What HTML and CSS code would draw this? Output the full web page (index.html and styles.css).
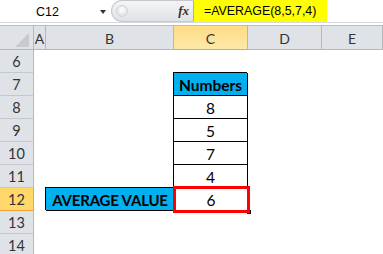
FILE: index.html
```html
<!DOCTYPE html>
<html>
<head>
<meta charset="utf-8">
<link rel="stylesheet" href="styles.css">
</head>
<body>
<div class="app">
  <div class="fbar">
    <div class="namebox"><span class="nb-text">C12</span><span class="nb-arrow"></span></div>
    <div class="pill"><span class="knob"></span><span class="fx">fx</span></div>
    <div class="formula">=AVERAGE(8,5,7,4)</div>
    <div class="rest"></div>
  </div>
  <div class="strip"></div>
  <div class="sheet">
    <div class="hd corner"><span class="tri"></span></div>
    <div class="hd col">A</div>
    <div class="hd col">B</div>
    <div class="hd col sel">C</div>
    <div class="hd col">D</div>
    <div class="hd col">E</div>

    <div class="hd row">6</div><div class="c"></div><div class="c"></div><div class="c"></div><div class="c"></div><div class="c"></div>
    <div class="hd row">7</div><div class="c"></div><div class="c"></div><div class="c t head">Numbers</div><div class="c"></div><div class="c"></div>
    <div class="hd row">8</div><div class="c"></div><div class="c"></div><div class="c t">8</div><div class="c"></div><div class="c"></div>
    <div class="hd row">9</div><div class="c"></div><div class="c"></div><div class="c t">5</div><div class="c"></div><div class="c"></div>
    <div class="hd row">10</div><div class="c"></div><div class="c"></div><div class="c t">7</div><div class="c"></div><div class="c"></div>
    <div class="hd row">11</div><div class="c"></div><div class="c"></div><div class="c t">4</div><div class="c"></div><div class="c"></div>
    <div class="hd row sel">12</div><div class="c"></div><div class="c label">AVERAGE VALUE</div><div class="c t active">6</div><div class="c"></div><div class="c"></div>
    <div class="hd row">13</div><div class="c"></div><div class="c"></div><div class="c"></div><div class="c"></div><div class="c"></div>
    <div class="hd row">14</div><div class="c"></div><div class="c"></div><div class="c"></div><div class="c"></div><div class="c"></div>
  </div>
</div>
</body>
</html>
```

FILE: styles.css
```css
html, body {
  margin: 0;
  padding: 0;
  background: #ffffff;
}
.app {
  width: 383px;
  height: 254px;
  overflow: hidden;
  font-family: Lato, "Liberation Sans", sans-serif;
}
.fbar {
  display: flex;
  height: 22px;
  border-bottom: 1px solid #d6d9dd;
  background: #ffffff;
}
.namebox {
  width: 110px;
  display: flex;
  align-items: center;
  font-family: "Liberation Sans", sans-serif;
  font-size: 12.5px;
  color: #000;
}
.nb-text {
  margin-left: 36px;
  margin-top: 1px;
}
.nb-arrow {
  margin-left: 41px;
  margin-top: 2px;
  width: 0;
  height: 0;
  border-left: 3.5px solid transparent;
  border-right: 3.5px solid transparent;
  border-top: 4px solid #333;
}
.pill {
  width: 83px;
  margin-left: 1px;
  background: linear-gradient(#f4f5f7, #dfe2e6);
  border-radius: 11px 0 0 11px;
  border: 1px solid #c3c7cc;
  border-right: 1px solid #a9adb3;
  box-sizing: border-box;
  display: flex;
  align-items: center;
}
.knob {
  width: 10px;
  height: 10px;
  border-radius: 50%;
  margin-left: 4px;
  background: radial-gradient(circle at 50% 40%, #ffffff, #d4d7db);
  border: 1px solid #d0d3d7;
}
.fx {
  margin-left: auto;
  margin-right: 4px;
  font-family: "Liberation Serif", serif;
  font-style: italic;
  font-weight: bold;
  font-size: 13px;
  color: #333;
}
.formula {
  width: 133px;
  background: #ffff00;
  font-family: "Liberation Sans", sans-serif;
  font-size: 12.4px;
  line-height: 22px;
  padding-left: 10px;
  box-sizing: border-box;
  color: #000;
}
.rest {
  flex: 1;
}
.strip {
  height: 2px;
  background: #ffffff;
}
.sheet {
  display: grid;
  grid-template-columns: 34px 12px 128px 74px 74px 61px;
  grid-template-rows: 25px repeat(9, 23px);
}
.hd {
  background: #dfe3e8;
  color: #333;
  font-size: 14px;
  display: flex;
  align-items: center;
  justify-content: center;
  box-sizing: border-box;
}
.col {
  border-top: 1px solid #b9bec5;
  border-right: 1px solid #b3b8be;
  border-bottom: 1px solid #b3b8be;
  padding-top: 1px;
}
.col.sel {
  background: linear-gradient(#fddc84, #fde9a8);
  border-bottom: 1px solid #f0a33c;
  border-right: 1px solid #e9b04f;
}
.corner {
  border-top: 1px solid #b9bec5;
  border-right: 1px solid #b3b8be;
  border-bottom: 1px solid #b3b8be;
  position: relative;
}
.tri {
  position: absolute;
  right: 4px;
  bottom: 2px;
  width: 0;
  height: 0;
  border-left: 14px solid transparent;
  border-bottom: 14px solid #c6cacf;
}
.row {
  border-right: 1px solid #b3b8be;
  border-bottom: 1px solid #c4c8cd;
  font-size: 14.5px;
}
.row.sel {
  background: #ffd869;
  border-right: 1px solid #f0a33c;
  border-bottom: 1px solid #f0a33c;
}
.c {
  background: #ffffff;
  box-sizing: border-box;
}
.t {
  border-right: 1px solid #000;
  border-bottom: 1px solid #000;
  box-shadow: -1px -1px 0 0 #000;
  display: flex;
  align-items: center;
  justify-content: center;
  font-size: 15.5px;
  color: #000;
  padding-top: 1px;
}
.t.head {
  background: #00b0f0;
  font-weight: bold;
}
.label {
  background: #00b0f0;
  border-bottom: 1px solid #000;
  box-shadow: -1px -1px 0 0 #000;
  display: flex;
  align-items: center;
  justify-content: center;
  font-weight: bold;
  font-size: 15px;
  letter-spacing: -0.2px;
  white-space: nowrap;
  color: #000;
  padding-top: 1px;
}
.active {
  position: relative;
  border: none;
  box-shadow: none;
}
.active::after {
  content: "";
  position: absolute;
  left: -1px;
  top: -2px;
  right: -2px;
  bottom: -2px;
  border: 3px solid #ff0000;
}
.active::before {
  content: "";
  position: absolute;
  right: -3px;
  bottom: -3px;
  width: 4px;
  height: 4px;
  background: #000;
}
```
